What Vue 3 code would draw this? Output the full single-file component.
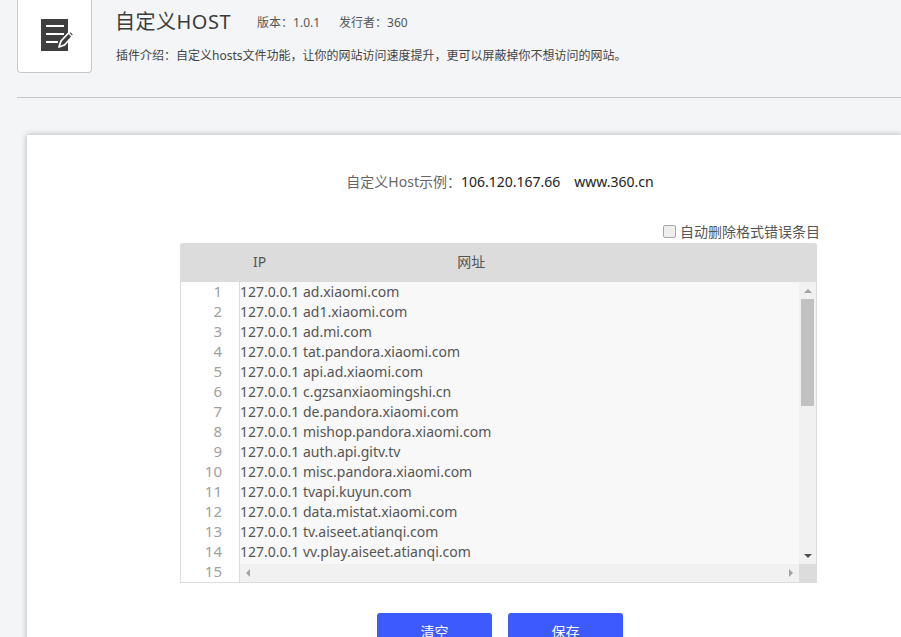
<script setup>
const hosts = [
  'ad.xiaomi.com', 'ad1.xiaomi.com', 'ad.mi.com', 'tat.pandora.xiaomi.com', 'api.ad.xiaomi.com',
  'c.gzsanxiaomingshi.cn', 'de.pandora.xiaomi.com', 'mishop.pandora.xiaomi.com', 'auth.api.gitv.tv',
  'misc.pandora.xiaomi.com', 'tvapi.kuyun.com', 'data.mistat.xiaomi.com', 'tv.aiseet.atianqi.com',
  'vv.play.aiseet.atianqi.com'
]
</script>

<template>
  <div class="page">
    <header class="head">
      <div class="logo">
        <svg width="40" height="32" viewBox="0 0 40 32">
          <rect x="0" y="0" width="27" height="32" fill="#3f3f3f" />
          <path d="M5 7H23M5 15H23M5 23H17" stroke="#fff" stroke-width="2" fill="none" />
          <path d="M18 28 L20 22 L29.5 12 L33 15.5 L23.5 26 Z" fill="#3f3f3f" stroke="#fff" stroke-width="1.8" stroke-linejoin="round" />
          <path d="M27.5 14 L31 17.5" stroke="#fff" stroke-width="1.4" />
        </svg>
      </div>
      <div class="info">
        <div class="title-row">
          <h1 class="title">自定义HOST</h1>
          <span class="meta">版本：1.0.1</span>
          <span class="meta">发行者：360</span>
        </div>
        <p class="desc">插件介绍：自定义hosts文件功能，让你的网站访问速度提升，更可以屏蔽掉你不想访问的网站。</p>
      </div>
    </header>
    <div class="rule"></div>
    <main class="card">
      <p class="example">自定义Host示例：<span class="dark">106.120.167.66<span class="gap"></span>www.360.cn</span></p>
      <label class="auto"><span class="check"></span>自动删除格式错误条目</label>
      <section class="table">
        <div class="thead"><span class="th-ip">IP</span><span class="th-url">网址</span></div>
        <div class="editor">
          <div class="gutter"><div v-for="n in 15" :key="n" class="num">{{ n }}</div></div>
          <div class="pane">
            <div class="pane-top">
              <div class="lines">
                <div v-for="h in hosts" :key="h" class="line">127.0.0.1 {{ h }}</div>
              </div>
              <div class="vbar">
                <span class="arrow up"></span>
                <div class="track"><div class="thumb"></div></div>
                <span class="arrow down"></span>
              </div>
            </div>
            <div class="hbar">
              <div class="hbar-main"><span class="arrow left"></span><span class="arrow right"></span></div>
              <div class="corner"></div>
            </div>
          </div>
        </div>
      </section>
      <div class="actions">
        <button class="btn">清空</button>
        <button class="btn">保存</button>
      </div>
    </main>
  </div>
</template>

<style>
html, body { margin: 0; background: #f3f5f7; overflow: hidden; }
</style>

<style scoped>
.page {
  width: 901px; height: 637px; overflow: hidden; box-sizing: border-box;
  background: #f3f5f7; padding-left: 17px;
  font-family: "Noto Sans", "Noto Sans CJK SC", sans-serif; color: #555;
}
.head { display: flex; height: 73px; }
.logo {
  width: 75px; height: 73px; box-sizing: border-box; background: #fff;
  border: 1px solid #c9c9c9; border-top: 0; border-radius: 0 0 4px 4px;
  display: flex; align-items: flex-start; padding: 19px 0 0 23px; flex: none;
}
.info { margin-left: 24px; }
.title-row { display: flex; align-items: center; height: 44px; }
.title { margin: 0 26px 0 -1px; font-size: 20px; font-weight: 400; color: #3c3c3c; line-height: 44px; letter-spacing: .5px; }
.meta { font-size: 12px; margin-right: 19px; color: #555; }
.desc { margin: 4px 0 0; font-size: 12px; line-height: 16px; color: #444; }
.rule { height: 1px; background: #c8c8c8; margin-top: 24px; }
.card {
  margin: 37px 0 0 10px; background: #fff; box-shadow: 0 0 6px rgba(0,0,0,.3);
  height: 520px; padding-top: 37px; box-sizing: border-box;
}
.example { margin: 0; text-align: center; font-size: 14px; line-height: 20px; padding-left: 72px; color: #666; }
.dark { color: #222; }
.gap { display: inline-block; width: 14px; }
.auto {
  display: flex; align-items: center; justify-content: flex-end; margin: 29px 81px 0 0;
  height: 20px; font-size: 14px; color: #555;
}
.check {
  width: 11px; height: 11px; border: 1px solid #a9a9a9; border-radius: 2px; background: #eee; margin-right: 4px;
}
.table { width: 637px; margin: 2px 0 0 153px; }
.thead {
  height: 39px; box-sizing: border-box; padding-bottom: 3px; background: #dcdcdc; display: flex; align-items: center; font-size: 14px; color: #555;
  border-radius: 2px 2px 0 0;
}
.th-ip { margin-left: 73px; }
.th-url { margin-left: 191px; }
.editor {
  display: flex; height: 301px; border: 1px solid #dcdcdc; border-top: 0; box-sizing: border-box;
}
.gutter { width: 58px; background: #fff; border-right: 1px solid #ddd; flex: none; overflow: hidden; }
.num { height: 20px; line-height: 18px; text-align: right; padding-right: 17px; font-size: 15px; color: #a0a0a0; }
.pane { flex: 1; display: flex; flex-direction: column; min-width: 0; }
.pane-top { flex: 1; display: flex; min-height: 0; background: #f8f8f8; }
.lines { flex: 1; }
.line { height: 20px; line-height: 20px; font-size: 14px; color: #555; white-space: nowrap; }
.vbar {
  width: 17px; background: #f1f1f1; display: flex; flex-direction: column; align-items: center; flex: none;
}
.track { flex: 1; width: 100%; }
.thumb { height: 107px; width: 13px; margin: 0 0 0 2px; background: #c1c1c1; }
.arrow { display: block; width: 0; height: 0; border-style: solid; border-color: transparent; flex: none; }
.up { border-width: 0 4px 4px; border-bottom-color: #a3a3a3; margin: 7px 0 6px; }
.down { border-width: 4px 4px 0; border-top-color: #505050; margin: 6px 0 6px; }
.hbar { height: 18px; display: flex; flex: none; background: #f1f1f1; }
.hbar-main { flex: 1; display: flex; align-items: center; justify-content: space-between; padding: 0 6px; }
.left { border-width: 4px 4px 4px 0; border-right-color: #a3a3a3; }
.right { border-width: 4px 0 4px 4px; border-left-color: #a3a3a3; }
.corner { width: 17px; background: #dcdcdc; flex: none; }
.actions { display: flex; gap: 16px; margin: 30px 0 0 350px; }
.btn {
  width: 115px; height: 36px; border: 0; border-radius: 3px; background: #3d5afe; color: #fff;
  font: inherit; font-size: 14px; padding: 0;
}
</style>
